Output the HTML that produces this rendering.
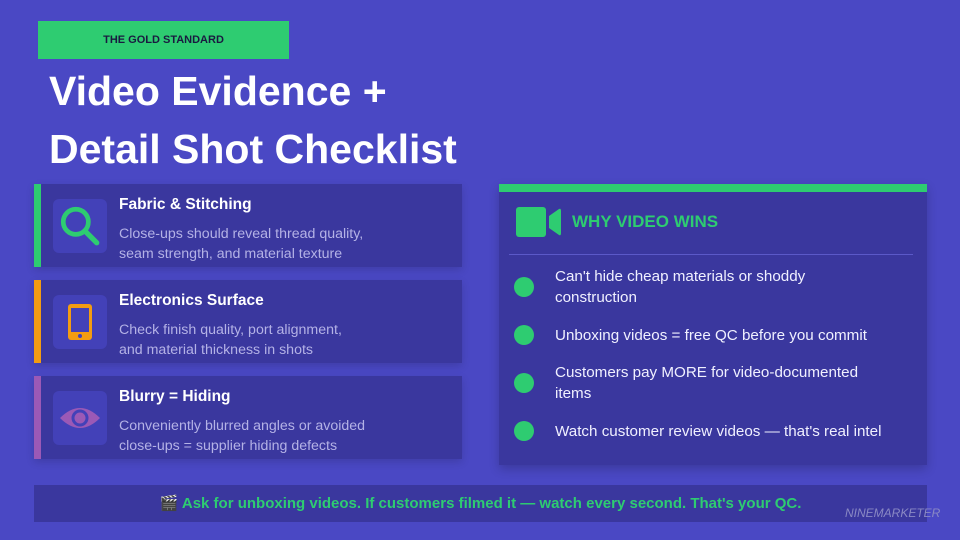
<!DOCTYPE html>
<html><head><meta charset="utf-8"><style>
*{margin:0;padding:0;box-sizing:border-box}
body{width:960px;height:540px;background:#4a48c4;font-family:"Liberation Sans",sans-serif;position:relative;overflow:hidden;color:#fff}
.abs{position:absolute}
.tag{left:38px;top:21px;width:251px;height:38px;background:#2ecc71;color:#1a1a40;font-size:11px;font-weight:bold;line-height:38px;text-align:center}
.h1{left:49px;font-size:41px;font-weight:bold;line-height:1;white-space:nowrap}
.card{left:34px;width:428px;height:83px;background:#3a379e;box-shadow:0 3px 8px rgba(0,0,0,.15)}
.bar{position:absolute;left:0;top:0;width:7px;height:100%}
.ib{position:absolute;left:19px;top:15px;width:54px;height:54px;background:#4341b8;border-radius:6px;display:flex;align-items:center;justify-content:center}
.ct{position:absolute;left:85px;top:12px;font-size:15.5px;font-weight:bold}
.cd{position:absolute;left:85px;top:41px;font-size:14.2px;line-height:19.5px;color:#b4b2e6;white-space:nowrap}
.panel{left:499px;top:184px;width:428px;height:281px;background:#3a379e;box-shadow:0 4px 10px rgba(0,0,0,.2)}
.li{position:absolute;left:56px;font-size:15.2px;line-height:21px;color:#f0f0ff;white-space:nowrap}
.dot{position:absolute;left:15px;width:20px;height:20px;border-radius:50%;background:#2ecc71}
</style></head><body>
<div class="abs tag">THE GOLD STANDARD</div>
<div class="abs h1" style="top:71px">Video Evidence +</div>
<div class="abs h1" style="top:129px">Detail Shot Checklist</div>

<div class="abs card" style="top:184px"><div class="bar" style="background:#2ecc71"></div>
<div class="ib"><svg width="46" height="46" viewBox="0 0 44 44"><circle cx="18" cy="18" r="12" fill="none" stroke="#2ecc71" stroke-width="4.5"/><line x1="27" y1="27" x2="38" y2="38" stroke="#2ecc71" stroke-width="5" stroke-linecap="round"/></svg></div>
<div class="ct">Fabric &amp; Stitching</div><div class="cd">Close-ups should reveal thread quality,<br>seam strength, and material texture</div></div>

<div class="abs card" style="top:280px"><div class="bar" style="background:#f39c12"></div>
<div class="ib"><svg width="44" height="44" viewBox="0 0 44 44"><rect x="10" y="4" width="24" height="36" rx="3" fill="#f39c12"/><rect x="13" y="8" width="18" height="24" fill="#4341b8"/><circle cx="22" cy="36" r="2" fill="#4341b8"/></svg></div>
<div class="ct">Electronics Surface</div><div class="cd">Check finish quality, port alignment,<br>and material thickness in shots</div></div>

<div class="abs card" style="top:376px"><div class="bar" style="background:#9b59b6"></div>
<div class="ib"><svg width="44" height="44" viewBox="0 0 44 44"><path d="M2 22 Q22 2 42 22 Q22 42 2 22Z" fill="#9b59b6"/><circle cx="22" cy="22" r="8.5" fill="#4341b8"/><circle cx="22" cy="22" r="5.5" fill="#9b59b6"/></svg></div>
<div class="ct">Blurry = Hiding</div><div class="cd">Conveniently blurred angles or avoided<br>close-ups = supplier hiding defects</div></div>

<div class="abs panel">
<div style="position:absolute;left:0;top:0;width:100%;height:8px;background:#2ecc71"></div>
<svg style="position:absolute;left:17px;top:23px" width="46" height="31" viewBox="0 0 46 31"><rect x="0" y="0" width="30" height="30" rx="3" fill="#2ecc71"/><path d="M33 9 L43 2 Q45 1 45 4 V26 Q45 29 43 28 L33 21Z" fill="#2ecc71"/></svg>
<div style="position:absolute;left:73px;top:28px;font-size:17px;font-weight:bold;color:#2ecc71">WHY VIDEO WINS</div>
<div style="position:absolute;left:10px;top:70px;width:404px;height:1px;background:#5b59c8"></div>
<div class="dot" style="top:93px"></div><div class="li" style="top:82px">Can't hide cheap materials or shoddy<br>construction</div>
<div class="dot" style="top:141px"></div><div class="li" style="top:141px">Unboxing videos = free QC before you commit</div>
<div class="dot" style="top:189px"></div><div class="li" style="top:178px">Customers pay MORE for video-documented<br>items</div>
<div class="dot" style="top:237px"></div><div class="li" style="top:237px">Watch customer review videos — that's real intel</div>
</div>

<div class="abs" style="left:34px;top:485px;width:893px;height:37px;background:#3a379e;text-align:center;line-height:37px;font-size:15px;font-weight:bold;color:#2ecc71;white-space:nowrap">🎬 Ask for unboxing videos. If customers filmed it — watch every second. That's your QC.</div>
<div class="abs" style="left:845px;top:506px;font-size:12px;font-style:italic;color:#8a89c4">NINEMARKETER</div>
</body></html>
